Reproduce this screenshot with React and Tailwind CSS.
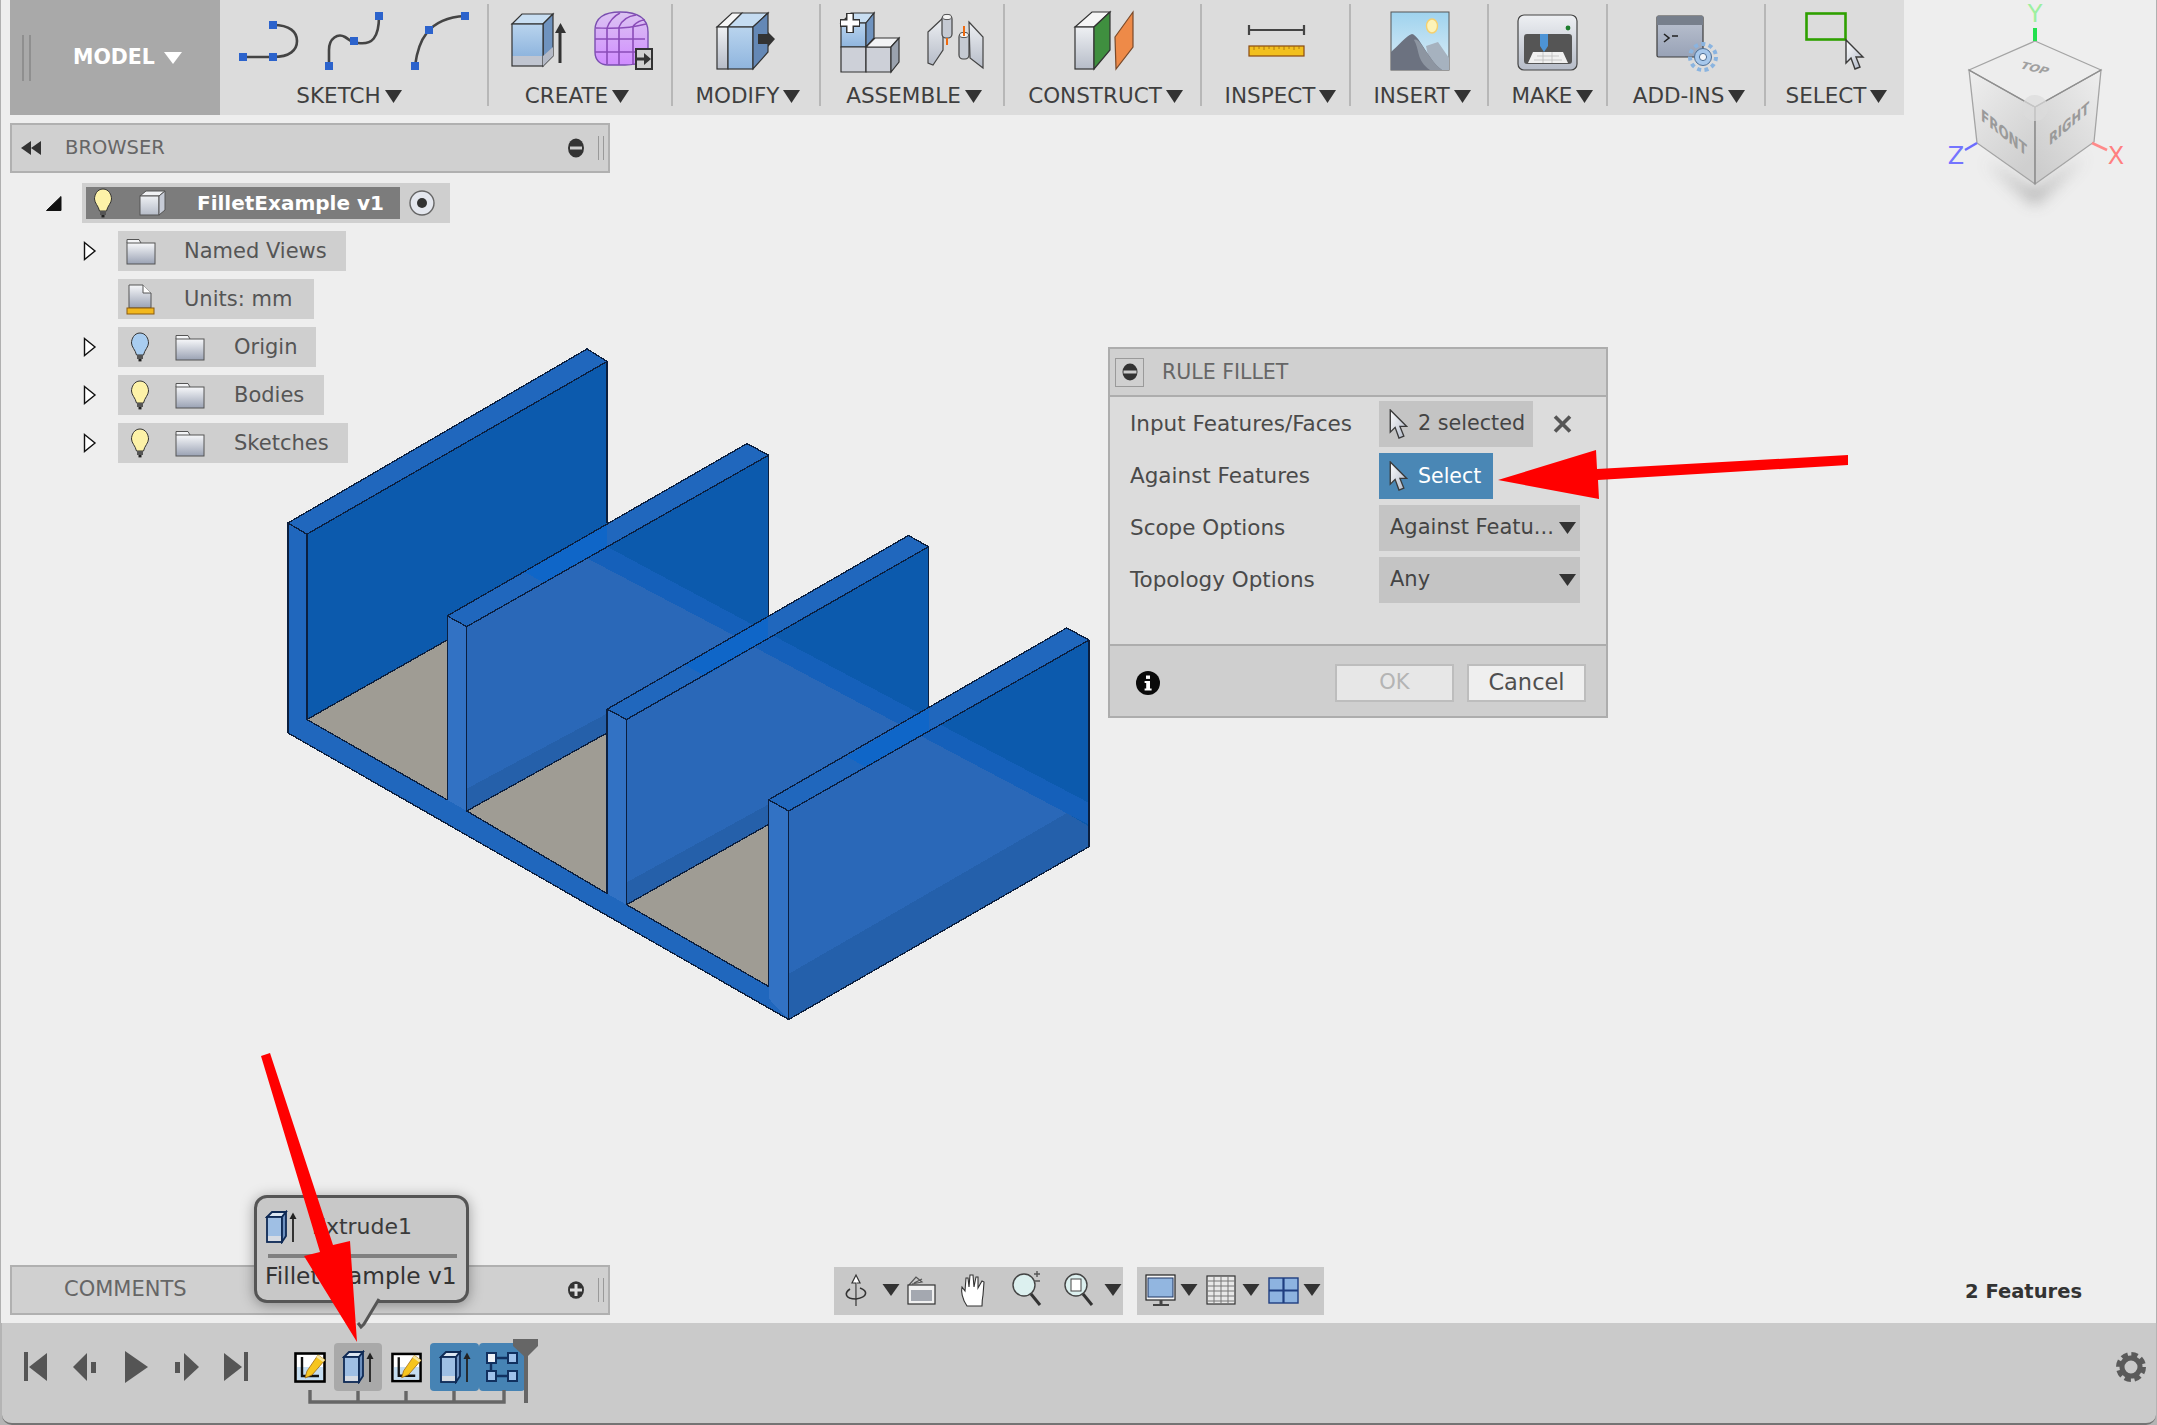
import React from "react";

const F = { fontFamily: '"DejaVu Sans", "Liberation Sans", sans-serif' };

const Z = (pts) => pts.map(([x, y]) => `${(270 + x / 1.845).toFixed(1)},${(340 + y / 2.24).toFixed(1)}`).join(" ");

function Defs() {
  return (
    <svg width="0" height="0" className="absolute">
      <defs>
        <linearGradient id="gBlue" x1="0" y1="0" x2="0" y2="1">
          <stop offset="0" stopColor="#b9d4ee" />
          <stop offset="1" stopColor="#8fb5de" />
        </linearGradient>
        <linearGradient id="gGrey" x1="0" y1="0" x2="0" y2="1">
          <stop offset="0" stopColor="#eef0f3" />
          <stop offset="1" stopColor="#b6bcc8" />
        </linearGradient>
        <linearGradient id="gFolder" x1="0" y1="0" x2="0" y2="1">
          <stop offset="0" stopColor="#f7f8fa" />
          <stop offset="1" stopColor="#9aa2b4" />
        </linearGradient>
        <linearGradient id="gSky" x1="0" y1="0" x2="0" y2="1">
          <stop offset="0" stopColor="#9fd3ee" />
          <stop offset="1" stopColor="#dcedf7" />
        </linearGradient>
        <linearGradient id="gPurple" x1="0" y1="0" x2="0" y2="1">
          <stop offset="0" stopColor="#dcc4f2" />
          <stop offset="1" stopColor="#d08cff" />
        </linearGradient>
        <linearGradient id="gCursor" x1="0" y1="0" x2="1" y2="1">
          <stop offset="0" stopColor="#ffffff" />
          <stop offset="1" stopColor="#aeb6c6" />
        </linearGradient>
        <linearGradient id="gWin" x1="0" y1="0" x2="0" y2="1">
          <stop offset="0" stopColor="#bcc3d1" />
          <stop offset="1" stopColor="#98a2b6" />
        </linearGradient>
        <linearGradient id="gCubeL" x1="0" y1="0" x2="0.6" y2="1">
          <stop offset="0" stopColor="#efefef" />
          <stop offset="1" stopColor="#cfcfcf" />
        </linearGradient>
        <linearGradient id="gCubeR" x1="1" y1="0" x2="0.2" y2="1">
          <stop offset="0" stopColor="#eeeeee" />
          <stop offset="1" stopColor="#cdcdcd" />
        </linearGradient>
        <filter id="fBlur" x="-60%" y="-60%" width="220%" height="220%">
          <feGaussianBlur stdDeviation="8" />
        </filter>
      </defs>
    </svg>
  );
}

const Caret = ({ cx, cy, w = 17, h = 12, fill = "#333" }) => (
  <polygon points={`${cx - w / 2},${cy - h / 2} ${cx + w / 2},${cy - h / 2} ${cx},${cy + h / 2}`} fill={fill} />
);

const Cursor = ({ x, y, s = 1 }) => (
  <polygon
    transform={`translate(${x} ${y}) scale(${s})`}
    points="0,0 0,23 5,18 9,29 14,27 10,17 17,17"
    fill="url(#gCursor)"
    stroke="#3a3a3a"
    strokeWidth="1.4"
  />
);

const Sq = ({ x, y }) => <rect x={x - 4} y={y - 4} width="8" height="8" fill="#2c63cc" />;

function ToolGroup({ left, width, label, dx = 0, last, children }) {
  return (
    <div className="flex flex-col items-center relative h-[115px] shrink-0" style={{ width }}>
      <svg width={width} height="78" viewBox={`${left} 4 ${width} 78`} className="shrink-0 mt-[4px]">
        {children}
      </svg>
      <div className="flex items-center gap-[4px] mt-[2px] text-[21.5px] leading-[24px] text-[#3f3f3f]" style={{ marginLeft: dx * 2 }}>
        <span>{label}</span>
        <svg width="17" height="13" viewBox="0 0 17 13"><polygon points="0,0 17,0 8.5,13" fill="#333" /></svg>
      </div>
      {!last && <div className="absolute right-[-1px] top-[4px] h-[102px] w-[2px] bg-[#b7b7b7]" />}
    </div>
  );
}

function Toolbar() {
  return (
    <div className="flex ml-[10px] w-[1894px] h-[115px] bg-[#dcdcdc] shrink-0">
      <div className="w-[210px] h-[115px] bg-[#a9a9a9] flex items-center shrink-0">
        <div className="ml-[12px] w-[9px] h-[46px] border-x-2 border-[#8f8f8f]" />
        <span className="ml-[42px] text-white font-bold text-[20.5px] leading-none">MODEL</span>
        <svg className="ml-[9px]" width="18" height="12" viewBox="0 0 18 12"><polygon points="0,0 18,0 9,12" fill="#fff" /></svg>
      </div>

      <ToolGroup left={220} width={268} label="SKETCH" dx={-5}>
        <path d="M243 57H273C290 57 297 50 297 41C297 32 290 25 273 25" fill="none" stroke="#444" strokeWidth="2.6" />
        <Sq x={243} y={57} /><Sq x={273} y={57} /><Sq x={273} y={25} />
        <path d="M329 66V50C329 38 338 33 345 37C350 40 352 43 358 43C372 45 379 38 379 16" fill="none" stroke="#444" strokeWidth="2.6" />
        <Sq x={329} y={66} /><Sq x={354} y={41} /><Sq x={379} y={16} />
        <path d="M415 66C418 42 427 18 465 16" fill="none" stroke="#444" strokeWidth="2.6" />
        <Sq x={415} y={66} /><Sq x={429} y={30} /><Sq x={465} y={16} />
      </ToolGroup>

      <ToolGroup left={488} width={184} label="CREATE" dx={-3}>
        <polygon points="512,24 522,14 553,14 543,24" fill="#c8def2" stroke="#333" strokeWidth="1.2" />
        <polygon points="543,24 553,14 553,56 543,66" fill="#6f93bf" stroke="#333" strokeWidth="1.2" />
        <rect x="512" y="24" width="31" height="32" fill="url(#gBlue)" />
        <rect x="512" y="56" width="31" height="10" fill="#c0c5d0" />
        <rect x="512" y="24" width="31" height="42" fill="none" stroke="#333" strokeWidth="1.2" />
        <polygon points="543,56 553,47 553,56 543,66" fill="#b4b9c5" />
        <path d="M560 63V30" stroke="#333" strokeWidth="3" />
        <polygon points="555,33 560.5,23 566,33" fill="#333" />
        <path d="M595 30C595 18 604 12 620 12C638 12 648 18 648 32V52C648 60 640 65 625 65H608C600 65 595 60 595 52Z" fill="url(#gPurple)" stroke="#7a4fb0" strokeWidth="1.4" />
        <path d="M595 39H645M595 52H645M607 28V64M619 27V65M633 26V65" stroke="#8a4cb8" strokeWidth="1.6" fill="none" />
        <path d="M596 28C606 28 625 30 646 24M607 28C610 20 614 16 620 13M619 27C622 20 628 16 636 15M633 26C637 22 640 20 645 20" stroke="#8a4cb8" strokeWidth="1.4" fill="none" />
        <rect x="636" y="49" width="16" height="20" fill="#cfcfcf" stroke="#333" strokeWidth="2" />
        <path d="M635 59H645" stroke="#333" strokeWidth="3" />
        <polygon points="644,53 651,59 644,65" fill="#333" />
      </ToolGroup>

      <ToolGroup left={672} width={148} label="MODIFY" dx={2}>
        <polygon points="717,27 732,13 742,13 728,27" fill="#f6f6f6" stroke="#333" strokeWidth="1.2" />
        <rect x="717" y="27" width="11" height="42" fill="url(#gGrey)" stroke="#333" strokeWidth="1.2" />
        <polygon points="728,27 742,13 768,13 753,27" fill="#c5dcf2" stroke="#333" strokeWidth="1.2" />
        <rect x="728" y="27" width="25" height="42" fill="url(#gBlue)" stroke="#333" strokeWidth="1.2" />
        <polygon points="753,27 768,13 768,52 753,69" fill="#6488b6" stroke="#333" strokeWidth="1.2" />
        <polygon points="758,34 768,34 768,32 775,39 768,47 768,44 758,44" fill="#333" />
      </ToolGroup>

      <ToolGroup left={820} width={184} label="ASSEMBLE" dx={2}>
        <polygon points="841,23 851,13 874,13 866,23" fill="#c8def2" stroke="#333" strokeWidth="1.2" />
        <rect x="841" y="23" width="25" height="24" fill="url(#gBlue)" stroke="#333" strokeWidth="1.2" />
        <polygon points="866,23 874,13 874,38 866,47" fill="#6f93bf" stroke="#333" strokeWidth="1.2" />
        <polygon points="841,47 866,47 866,72 841,72" fill="#cdd0d8" stroke="#333" strokeWidth="1.2" />
        <polygon points="866,47 891,47 891,72 866,72" fill="#cdd0d8" stroke="#333" strokeWidth="1.2" />
        <polygon points="866,47 875,38 899,38 891,47" fill="#f2f3f5" stroke="#333" strokeWidth="1.2" />
        <polygon points="891,47 899,38 899,62 891,72" fill="#9aa2ae" stroke="#333" strokeWidth="1.2" />
        <path d="M850 13V33M840 23H860" stroke="#333" strokeWidth="8" />
        <path d="M850 14V32M841 23H859" stroke="#fff" strokeWidth="5" />
        <polygon points="928,32 943,18 943,50 933,65 928,63" fill="url(#gGrey)" stroke="#444" strokeWidth="1.2" />
        <rect x="942" y="15" width="10" height="23" rx="4" fill="#c5cad3" stroke="#444" strokeWidth="1.2" />
        <ellipse cx="947" cy="17" rx="4.5" ry="2.6" fill="#f4f4f4" stroke="#555" strokeWidth="1" />
        <path d="M947 38V45" stroke="#ef6a10" strokeWidth="2" />
        <polygon points="969,22 983,37 983,68 970,58" fill="url(#gGrey)" stroke="#444" strokeWidth="1.2" />
        <rect x="959" y="33" width="10" height="26" rx="4" fill="#c5cad3" stroke="#444" strokeWidth="1.2" />
        <ellipse cx="964" cy="35" rx="4.5" ry="2.6" fill="#f4f4f4" stroke="#555" strokeWidth="1" />
        <path d="M964 26V36" stroke="#ef6a10" strokeWidth="2" />
      </ToolGroup>

      <ToolGroup left={1004} width={197} label="CONSTRUCT" dx={3}>
        <polygon points="1075,27 1092,12 1110,12 1094,27" fill="#f6f6f6" stroke="#333" strokeWidth="1.2" />
        <rect x="1075" y="27" width="19" height="42" fill="url(#gGrey)" stroke="#333" strokeWidth="1.2" />
        <polygon points="1094,27 1110,12 1110,50 1094,69" fill="#3f8f3f" stroke="#333" strokeWidth="1.2" />
        <polygon points="1115,37 1133,12 1133,47 1116,69" fill="#ee8a48" stroke="#7a4a2a" strokeWidth="1.2" />
      </ToolGroup>

      <ToolGroup left={1201} width={149} label="INSPECT" dx={5}>
        <path d="M1249 25V35M1304 25V35M1249 30H1304" stroke="#444" strokeWidth="2.2" fill="none" />
        <rect x="1249" y="46" width="55" height="10" fill="#f2c01e" stroke="#8a4a10" strokeWidth="1.2" />
        <path d="M1254 46v4M1259 46v3M1264 46v4M1269 46v3M1274 46v4M1279 46v3M1284 46v4M1289 46v3M1294 46v4M1299 46v3" stroke="#a06a10" strokeWidth="0.8" />
      </ToolGroup>

      <ToolGroup left={1350} width={138} label="INSERT" dx={3}>
        <rect x="1391" y="12" width="58" height="58" fill="url(#gSky)" stroke="#555" strokeWidth="1" />
        <ellipse cx="1432" cy="26" rx="5.5" ry="7" fill="#fdf3b8" stroke="#f5d070" strokeWidth="1.4" />
        <polygon points="1431,70 1426,46 1438,42 1449,58 1449,70" fill="#a6b2bf" />
        <path d="M1391 70V52C1398 46 1406 36 1412 34C1420 36 1428 60 1442 70Z" fill="#6c7280" />
        <path d="M1414 40C1420 50 1416 60 1430 70H1442C1428 60 1420 36 1414 40Z" fill="#8d95a1" />
      </ToolGroup>

      <ToolGroup left={1488} width={119} label="MAKE" dx={5}>
        <rect x="1518" y="15" width="59" height="55" rx="6" fill="url(#gGrey)" stroke="#444" strokeWidth="1.2" />
        <rect x="1524" y="34" width="48" height="30" rx="3" fill="#555" />
        <circle cx="1568" cy="28" r="2.4" fill="#1d7d2d" />
        <polygon points="1533,52 1563,52 1568,63 1528,63" fill="#f0f0f0" />
        <path d="M1537 56H1559M1534 60H1562M1543 52V63M1552 52V63" stroke="#bbb" strokeWidth="0.8" />
        <polygon points="1540,34 1548,34 1548,46 1544,52 1540,46" fill="#4d94d6" />
      </ToolGroup>

      <ToolGroup left={1607} width={158} label="ADD-INS" dx={3}>
        <rect x="1657" y="16" width="46" height="41" rx="1.5" fill="url(#gWin)" stroke="#3c3c3c" strokeWidth="1.2" />
        <rect x="1657" y="16" width="46" height="9" fill="#777f8c" />
        <path d="M1664 34L1669 38L1664 42M1672 36H1678" stroke="#222" strokeWidth="1.6" fill="none" />
        <circle cx="1703" cy="57" r="13" fill="none" stroke="#8ab4e0" strokeWidth="4" strokeDasharray="4 3.4" />
        <circle cx="1703" cy="57" r="8.5" fill="#a7c8ec" stroke="#4d6e94" strokeWidth="1" />
        <circle cx="1703" cy="57" r="3.6" fill="#f4f6f9" stroke="#4d6e94" strokeWidth="1" />
      </ToolGroup>

      <ToolGroup left={1765} width={139} label="SELECT" dx={2} last>
        <rect x="1806.5" y="13.5" width="39" height="26" fill="none" stroke="#2fa000" strokeWidth="2.6" />
        <Cursor x={1846} y={40} s={1} />
      </ToolGroup>
    </div>
  );
}

const Bulb = ({ color = "#fdf2a8" }) => (
  <svg width="20" height="30" viewBox="0 0 20 30">
    <path d="M10 1C4 1 1.5 7 1.5 11C1.5 15 5.5 18 6.5 23H13.5C14.5 18 18.5 15 18.5 11C18.5 7 16 1 10 1Z" fill={color} stroke="#333" strokeWidth="1" />
    <rect x="7" y="23" width="6" height="4" fill="#555" />
    <rect x="8.5" y="27" width="3" height="2.4" fill="#222" />
  </svg>
);

const Folder = () => (
  <svg width="30" height="27" viewBox="0 0 30 27">
    <path d="M1 5V1.5H13L15 5" fill="#f3f4f6" stroke="#555" strokeWidth="1" />
    <rect x="1" y="5" width="28" height="21" fill="url(#gFolder)" stroke="#555" strokeWidth="1" />
  </svg>
);

const Expand = () => (
  <svg width="14" height="20" viewBox="0 0 14 20" className="shrink-0">
    <polygon points="1.5,1.5 12,10 1.5,18.5" fill="#fff" stroke="#111" strokeWidth="1.4" />
  </svg>
);

function TreeRow({ width, expand = true, children }) {
  return (
    <div className="flex items-center h-10">
      <div className="ml-[83px] w-[35px] flex shrink-0">{expand && <Expand />}</div>
      <div className="h-10 bg-[#cfcfcf] flex items-center text-[21px] text-[#555]" style={{ width }}>
        {children}
      </div>
    </div>
  );
}

const Label = ({ ml, children }) => (
  <span className="pt-[2px]" style={{ marginLeft: ml }}>{children}</span>
);

function Browser() {
  return (
    <div className="shrink-0">
      <div className="ml-[10px] mt-[8px] w-[600px] h-[50px] bg-[#d0d0d0] border-2 border-[#b0b0b0] flex items-center">
        <svg className="ml-[8px]" width="22" height="14" viewBox="0 0 22 14"><polygon points="11,0 11,14 1,7" fill="#333" /><polygon points="21,0 21,14 11,7" fill="#333" /></svg>
        <span className="ml-[23px] text-[19.5px] text-[#666]">BROWSER</span>
        <svg className="ml-auto mr-[14px]" width="16" height="20" viewBox="0 0 16 20"><ellipse cx="8" cy="10" rx="8" ry="9.5" fill="#333" /><rect x="2" y="8.5" width="12" height="3" fill="#ccc" /></svg>
        <div className="mr-[4px] w-[6px] h-[24px] border-x border-[#999]" />
      </div>
      <div className="mt-[10px] flex flex-col gap-2">
        <div className="flex items-center h-10">
          <svg className="ml-[46px] shrink-0" width="16" height="15" viewBox="0 0 16 15"><polygon points="15,0.5 15,14.5 0.5,14.5" fill="#111" stroke="#111" /></svg>
          <div className="ml-[20px] w-[368px] h-10 bg-[#cfcfcf] flex items-center">
            <div className="ml-[4px] w-[314px] h-8 bg-[#7c7c7c] flex items-center text-white font-bold text-[20px]">
              <span className="ml-[7px] flex"><Bulb /></span>
              <svg className="ml-[26px]" width="27" height="26" viewBox="0 0 27 26">
                <polygon points="1,6 7,1 26,1 20,6" fill="#f1f2f4" stroke="#555" strokeWidth="1" />
                <rect x="1" y="6" width="19" height="19" fill="url(#gGrey)" stroke="#555" strokeWidth="1" />
                <polygon points="20,6 26,1 26,20 20,25" fill="#c6cbd6" stroke="#555" strokeWidth="1" />
              </svg>
              <span className="ml-[31px] leading-none">FilletExample v1</span>
            </div>
            <svg className="ml-[9px]" width="26" height="26" viewBox="0 0 26 26">
              <circle cx="13" cy="13" r="12" fill="#e4e7ee" stroke="#666" strokeWidth="1.4" />
              <circle cx="13" cy="13" r="5" fill="#333" />
            </svg>
          </div>
        </div>
        <TreeRow width={228}>
          <span className="ml-[8px] flex"><Folder /></span>
          <Label ml={28}>Named Views</Label>
        </TreeRow>
        <TreeRow width={196} expand={false}>
          <svg className="ml-[8px]" width="29" height="31" viewBox="0 0 29 31">
            <path d="M3 1H17L25 9V24H3Z" fill="url(#gFolder)" stroke="#555" strokeWidth="1" />
            <path d="M17 1V9H25" fill="#fff" stroke="#555" strokeWidth="1" />
            <rect x="1" y="24" width="27" height="6" fill="#f2b81e" stroke="#8a5a10" strokeWidth="1" />
          </svg>
          <Label ml={29}>Units: mm</Label>
        </TreeRow>
        <TreeRow width={198}>
          <span className="ml-[12px] flex"><Bulb color="#a9cdf0" /></span>
          <span className="ml-[25px] flex"><Folder /></span>
          <Label ml={29}>Origin</Label>
        </TreeRow>
        <TreeRow width={206}>
          <span className="ml-[12px] flex"><Bulb /></span>
          <span className="ml-[25px] flex"><Folder /></span>
          <Label ml={29}>Bodies</Label>
        </TreeRow>
        <TreeRow width={230}>
          <span className="ml-[12px] flex"><Bulb /></span>
          <span className="ml-[25px] flex"><Folder /></span>
          <Label ml={29}>Sketches</Label>
        </TreeRow>
      </div>
    </div>
  );
}

function Model() {
  const line = "#0b1f3f";
  const patch = [[470, 520], [622, 412], [622, 463], [507, 545]];
  const shift = (p, dx, dy) => p.map(([x, y]) => [x + dx, y + dy]);
  return (
    <svg className="absolute left-[280px] top-[340px]" width="820" height="690" viewBox="280 340 820 690">
      <g shapeRendering="crispEdges">
        <polygon points={Z([[68, 435], [622, 48], [622, 480], [68, 850]])} fill="#0c5aad" />
        <polygon points={Z([[68, 850], [327, 672], [327, 1030]])} fill="#9f9c94" />

        <polygon points={Z([[363, 642], [920, 258], [920, 680], [363, 1055]])} fill="#0c5aad" />
        <polygon points={Z([[363, 642], [585, 489], [886, 681], [363, 1055]])} fill="#2a68b8" />
        <polygon points={Z([[585, 489], [622, 463], [920, 657], [886, 681]])} fill="#1560ba" />
        <polygon points={Z([[363, 1005], [640, 825], [640, 880], [363, 1055]])} fill="#2560aa" />
        <polygon points={Z([[363, 1055], [622, 880], [622, 1240]])} fill="#9f9c94" />

        <polygon points={Z([[658, 850], [1215, 463], [1215, 890], [658, 1265]])} fill="#0c5aad" />
        <polygon points={Z([[658, 850], [892, 687], [1203, 888], [658, 1265]])} fill="#2a68b8" />
        <polygon points={Z([[892, 687], [928, 662], [1215, 847], [1215, 880], [1203, 888]])} fill="#1560ba" />
        <polygon points={Z([[658, 1215], [935, 1030], [935, 1080], [658, 1265]])} fill="#2560aa" />
        <polygon points={Z([[658, 1265], [920, 1085], [920, 1448]])} fill="#9f9c94" />

        <polygon points={Z([[957, 1055], [1511, 672], [1511, 1135], [957, 1522]])} fill="#0c5aad" />
        <polygon points={Z([[957, 1055], [1201, 887], [1470, 1060], [957, 1420]])} fill="#2a68b8" />
        <polygon points={Z([[1201, 887], [1237, 862], [1511, 1037], [1511, 1085], [1470, 1060]])} fill="#1560ba" />
        <polygon points={Z([[957, 1420], [1470, 1060], [1511, 1090], [1511, 1135], [957, 1522]])} fill="#2460ab" />

        <polygon points={Z([[33, 410], [585, 20], [622, 48], [68, 435]])} fill="#2067bd" />
        <polygon points={Z([[33, 410], [68, 435], [68, 850], [33, 880]])} fill="#2067bd" />
        <polygon points={Z([[33, 880], [68, 850], [327, 1030], [363, 1055], [622, 1240], [658, 1265], [920, 1448], [957, 1475], [957, 1522]])} fill="#2067bd" />

        <polygon points={Z([[327, 618], [880, 232], [920, 258], [363, 642]])} fill="#2067bd" />
        <polygon points={Z(patch)} fill="#0f66c8" />
        <polygon points={Z([[327, 618], [363, 642], [363, 1055], [327, 1030]])} fill="#3272c4" />

        <polygon points={Z([[622, 827], [1178, 438], [1215, 463], [658, 850]])} fill="#2067bd" />
        <polygon points={Z(shift(patch, 296, 208))} fill="#0f66c8" />
        <polygon points={Z([[622, 827], [658, 850], [658, 1265], [622, 1240]])} fill="#3272c4" />

        <polygon points={Z([[920, 1030], [1470, 645], [1511, 672], [957, 1055]])} fill="#2067bd" />
        <polygon points={Z(shift(patch, 594, 413))} fill="#0f66c8" />
        <polygon points={Z([[920, 1030], [957, 1055], [957, 1522], [920, 1475]])} fill="#3272c4" />
      </g>
      <g fill="none" stroke={line} strokeWidth="1.3" shapeRendering="crispEdges">
        <polyline points={Z([[68, 850], [68, 435], [622, 48]])} />
        <polyline points={Z([[33, 880], [33, 410], [585, 20], [622, 48], [622, 410]])} />
        <polyline points={Z([[33, 410], [68, 435]])} />
        <polyline points={Z([[327, 1030], [327, 618], [880, 232], [920, 258], [920, 615]])} />
        <polyline points={Z([[327, 618], [363, 642], [920, 258]])} />
        <polyline points={Z([[363, 642], [363, 1055]])} />
        <polyline points={Z([[622, 1240], [622, 827], [1178, 438], [1215, 463], [1215, 825]])} />
        <polyline points={Z([[622, 827], [658, 850], [1215, 463]])} />
        <polyline points={Z([[658, 850], [658, 1265]])} />
        <polyline points={Z([[920, 1448], [920, 1030], [1470, 645], [1511, 672], [1511, 1135]])} />
        <polyline points={Z([[920, 1030], [957, 1055], [1511, 672]])} />
        <polyline points={Z([[957, 1055], [957, 1522]])} />
        <polyline points={Z([[33, 880], [957, 1522], [1511, 1135]])} />
        <polyline points={Z([[327, 672], [68, 850], [327, 1030]])} />
        <polyline points={Z([[622, 880], [363, 1055], [622, 1240]])} />
        <polyline points={Z([[920, 1085], [658, 1265], [920, 1448]])} />
      </g>
    </svg>
  );
}

function ViewCube() {
  return (
    <svg className="absolute right-0 top-0" width="217" height="220" viewBox="1940 0 217 220">
      <polygon points="1985,160 2035,192 2086,155 2035,204" fill="#8a8a8a" opacity="0.75" filter="url(#fBlur)" />
      <polygon points="2035,107 1969,70 1977,143 2035,184" fill="url(#gCubeL)" stroke="#a4a4a4" strokeWidth="1.3" />
      <polygon points="2035,107 2101,70 2094,142 2035,184" fill="url(#gCubeR)" stroke="#a4a4a4" strokeWidth="1.3" />
      <polygon points="2035,41 2101,70 2035,107 1969,70" fill="#ededed" stroke="#a4a4a4" strokeWidth="1.3" />
      <path d="M1969 70L2035 107L2101 70M2035 107V184" fill="none" stroke="#8e8e8e" strokeWidth="1.3" />
      <circle cx="2035" cy="108" r="13" fill="#dcdcdc" opacity="0.7" />
      <text transform="matrix(1 0.25 -0.55 0.75 2019 68)" fontSize="12" fill="#a0a0a0" style={F} fontWeight="bold">TOP</text>
      <text transform="matrix(1 0.8 0 1.35 1981 120)" fontSize="12" fill="#9a9a9a" style={F} fontWeight="bold">FRONT</text>
      <text transform="matrix(1 -0.85 0 1.35 2049 146)" fontSize="11.5" fill="#9a9a9a" style={F} fontWeight="bold">RIGHT</text>
      <path d="M2035 28V41" stroke="#22e04e" strokeWidth="4" />
      <text x="2035" y="22" textAnchor="middle" fontSize="24" fill="#9cf0a0" style={F}>Y</text>
      <path d="M1965 150L1977 143" stroke="#6c6cff" strokeWidth="2.6" />
      <text x="1956" y="164" textAnchor="middle" fontSize="24" fill="#7474ff" style={F}>Z</text>
      <path d="M2092 143L2107 150" stroke="#ff8a8a" strokeWidth="2.6" />
      <text x="2116" y="164" textAnchor="middle" fontSize="24" fill="#ff7f7f" style={F}>X</text>
    </svg>
  );
}

function FieldRow({ label, children }) {
  return (
    <div className="flex items-center h-[46px]">
      <span className="w-[249px] shrink-0 text-[21.5px] text-[#4a4a4a]">{label}</span>
      {children}
    </div>
  );
}

function DropField({ text }) {
  return (
    <div className="w-[201px] h-[46px] bg-[#c4c4c4] flex items-center pl-[11px] pr-[4px] text-[21px] text-[#444]">
      <span>{text}</span>
      <svg className="ml-auto" width="17" height="12" viewBox="0 0 17 12"><polygon points="0,0 17,0 8.5,12" fill="#333" /></svg>
    </div>
  );
}

const SmallCursor = () => (
  <svg className="ml-[10px]" width="19" height="30" viewBox="-1 -1 19 31"><Cursor x={0} y={0} /></svg>
);

function Dialog() {
  return (
    <div className="absolute left-[1108px] top-[347px] w-[500px] h-[371px] border-2 border-[#adadad] flex flex-col bg-[#dcdcdc]">
      <div className="h-[48px] shrink-0 bg-[#d0d0d0] border-b-2 border-[#adadad] flex items-center">
        <div className="ml-[5px] w-[29px] h-[29px] border border-[#9a9a9a] flex items-center justify-center">
          <svg width="16" height="18" viewBox="0 0 16 18"><ellipse cx="8" cy="9" rx="7.5" ry="8.5" fill="#333" /><rect x="1.5" y="7.5" width="13" height="3" fill="#ccc" /></svg>
        </div>
        <span className="ml-[18px] text-[20.5px] text-[#666]">RULE FILLET</span>
      </div>
      <div className="flex-1 pl-[20px] pt-[4px] flex flex-col gap-[6px]">
        <FieldRow label="Input Features/Faces">
          <div className="w-[154px] h-[46px] bg-[#c4c4c4] flex items-center text-[20.7px] text-[#444]">
            <SmallCursor />
            <span className="ml-[10px]">2 selected</span>
          </div>
          <svg className="ml-[20px]" width="19" height="18" viewBox="0 0 19 18"><path d="M2 1.5L17 16.5M17 1.5L2 16.5" stroke="#555" strokeWidth="3.6" /></svg>
        </FieldRow>
        <FieldRow label="Against Features">
          <div className="w-[114px] h-[46px] bg-[#4a87b5] flex items-center text-[20.5px] text-white">
            <SmallCursor />
            <span className="ml-[10px]">Select</span>
          </div>
        </FieldRow>
        <FieldRow label="Scope Options"><DropField text="Against Featu..." /></FieldRow>
        <FieldRow label="Topology Options"><DropField text="Any" /></FieldRow>
      </div>
      <div className="h-[72px] shrink-0 bg-[#cfcfcf] border-t-2 border-[#adadad] flex items-center pt-[3px]">
        <svg className="ml-[26px]" width="24" height="24" viewBox="0 0 24 24">
          <circle cx="12" cy="12" r="12" fill="#0a0a0a" />
          <rect x="10" y="4.5" width="4" height="3.4" fill="#fff" />
          <path d="M8.6 10H14V17.5H15.6V19.6H8.6V17.5H10.2V12H8.6Z" fill="#fff" />
        </svg>
        <div className="ml-[175px] w-[119px] h-[38px] bg-[#e7e7e7] border-2 border-[#bdbdbd] flex items-center justify-center text-[21px] text-[#b4b4b4]">OK</div>
        <div className="ml-[13px] w-[119px] h-[38px] bg-[#efefef] border-2 border-[#bdbdbd] flex items-center justify-center text-[22.5px] text-[#4f4f4f]">Cancel</div>
      </div>
    </div>
  );
}

const ExtrudeIcon = ({ w = 32, h = 34 }) => (
  <svg width={w} height={h} viewBox="0 0 32 34">
    <polygon points="2,7 7,2 21,2 17,7" fill="#dbe6f2" stroke="#0f2a55" strokeWidth="1.8" />
    <rect x="2" y="7" width="15" height="25" fill="#9fbfe4" stroke="#0f2a55" strokeWidth="1.8" />
    <rect x="3" y="26" width="13" height="5" fill="#d6dbe3" />
    <polygon points="17,7 21,2 21,26 17,32" fill="#6c8fbe" stroke="#0f2a55" strokeWidth="1.8" />
    <path d="M28 32V8" stroke="#222" strokeWidth="1.8" />
    <polygon points="24.5,9 28,2.5 31.5,9" fill="#222" />
  </svg>
);

const SketchIcon = () => (
  <svg width="32" height="31" viewBox="0 0 32 31">
    <rect x="1.5" y="1.5" width="29" height="28" fill="#fff" stroke="#000" strokeWidth="2.6" />
    <rect x="3" y="15" width="26" height="13" fill="#b5d4ee" opacity="0.8" />
    <path d="M8 5V24H25" stroke="#111" strokeWidth="2.4" fill="none" />
    <polygon points="24,3 31,8 18,23 11,26 13,19" fill="#f6c51e" stroke="#a06a10" strokeWidth="0.8" />
    <polygon points="24,3 31,8 29,10 22,5" fill="#f6e6a0" />
  </svg>
);

const NetworkIcon = () => (
  <svg width="32" height="34" viewBox="0 0 32 34">
    <path d="M5 8H27M5 8V26M5 26H27" stroke="#11305f" strokeWidth="2.4" fill="none" />
    <rect x="1" y="3" width="9" height="10" fill="#eef2f7" stroke="#11305f" strokeWidth="2" />
    <rect x="22" y="3" width="9" height="10" fill="#9fc1ea" stroke="#11305f" strokeWidth="2" />
    <rect x="1" y="21" width="9" height="10" fill="#9fc1ea" stroke="#11305f" strokeWidth="2" />
    <rect x="22" y="21" width="9" height="10" fill="#9fc1ea" stroke="#11305f" strokeWidth="2" />
  </svg>
);

const PB = ({ w = 24, children }) => (
  <svg width={w} height="32" viewBox={`0 0 ${w} 32`} className="shrink-0">{children}</svg>
);

function Timeline() {
  return (
    <div className="shrink-0 bg-[#b4b4b4]">
      <div className="relative h-[102px] ml-[2px] mr-[1px] bg-[#cacaca] rounded-b-[10px] border-b-2 border-[#747474] flex items-center pb-[12px]">
        <div className="ml-[22px] flex items-center gap-[25px]">
          <PB><rect x="0" y="1" width="4" height="29" fill="#555" /><polygon points="23,2 23,30 5,16" fill="#555" /></PB>
          <PB w={26}><polygon points="14,2 14,30 0,16" fill="#555" /><rect x="18" y="11" width="5" height="11" fill="#555" /></PB>
          <PB><polygon points="1,0 1,32 24,16" fill="#555" /></PB>
          <PB w={26}><rect x="2" y="11" width="5" height="11" fill="#555" /><polygon points="11,2 11,30 26,16" fill="#555" /></PB>
          <PB><polygon points="0,2 0,30 18,16" fill="#555" /><rect x="20" y="1" width="4" height="29" fill="#555" /></PB>
        </div>
        <div className="ml-[46px] flex items-center h-12">
          <div className="w-[32px] flex"><SketchIcon /></div>
          <div className="ml-[8px] w-[48px] h-12 bg-[#a9a9a9] rounded-[4px] flex items-center justify-center"><ExtrudeIcon /></div>
          <div className="ml-[9px] w-[31px] flex"><SketchIcon /></div>
          <div className="ml-[8px] w-[49px] h-12 bg-[#4683b4] rounded-[4px] flex items-center justify-center"><ExtrudeIcon /></div>
          <div className="w-[46px] h-12 bg-[#4683b4] rounded-[4px] flex items-center justify-center"><NetworkIcon /></div>
        </div>
        <svg className="absolute left-[-2px] top-[-1323px]" width="560" height="1425" viewBox="0 0 560 1425">
          <path d="M310 1390V1402H504V1390M358 1391V1402M406 1391V1402M454 1391V1402" stroke="#666" strokeWidth="3.4" fill="none" />
          <path d="M526 1352V1403" stroke="#666" strokeWidth="4" />
          <polygon points="513,1339 538,1339 538,1346 526,1358 513,1346" fill="#666" />
        </svg>
        <svg className="ml-auto mr-[8px]" width="34" height="34" viewBox="0 0 34 34">
          <circle cx="17" cy="17" r="12" fill="none" stroke="#5a5a5a" strokeWidth="6" strokeDasharray="6 3.42" />
          <circle cx="17" cy="17" r="9" fill="none" stroke="#5a5a5a" strokeWidth="5" />
        </svg>
      </div>
    </div>
  );
}

function ViewControls() {
  return (
    <>
      <svg className="ml-[224px] mt-[2px] bg-[#c8c8c8]" width="289" height="48" viewBox="834 1267 289 48">
        <path d="M856 1306V1283H852L856 1275L860 1283H857" fill="#fff" stroke="#333" strokeWidth="1.2" />
        <path d="M860 1288C868 1291 868 1297 856 1299C845 1299 844 1293 850 1289" fill="none" stroke="#333" strokeWidth="1.6" />
        <Caret cx={891} cy={1290} />
        <path d="M909 1285L916 1277L922 1282L912 1284M922 1279L914 1283" fill="none" stroke="#555" strokeWidth="1.2" />
        <rect x="908" y="1285" width="27" height="19" fill="#f1f1f1" stroke="#333" strokeWidth="1.2" />
        <rect x="911" y="1290" width="21" height="11" fill="#a4a8b0" />
        <g transform="translate(3 -5)">
          <path d="M964 1311C959 1304 958 1296 959 1292L962 1296L963 1283L965 1283L966 1292L967 1280L970 1280L971 1292L973 1282L975 1282L975 1293L979 1286L981 1287L980 1300C979 1305 979 1308 979 1311Z" fill="#fff" stroke="#333" strokeWidth="1.1" />
        </g>
        <circle cx="1024" cy="1285" r="11" fill="#dcf0ef" stroke="#444" strokeWidth="1.4" />
        <path d="M1031 1294L1040 1305" stroke="#333" strokeWidth="3" />
        <path d="M1034 1274H1040M1037 1271V1277M1034 1281H1040" stroke="#555" strokeWidth="1.4" />
        <circle cx="1076" cy="1285" r="11" fill="#dcf0ef" stroke="#444" strokeWidth="1.4" />
        <rect x="1071" y="1279" width="10" height="12" fill="#fff" stroke="#444" />
        <path d="M1083 1294L1092 1305" stroke="#333" strokeWidth="3" />
        <Caret cx={1113} cy={1290} />
      </svg>
      <svg className="ml-[14px] mt-[2px] bg-[#c8c8c8]" width="187" height="48" viewBox="1137 1267 187 48">
        <rect x="1146" y="1275" width="29" height="25" fill="#f5f5f5" stroke="#222" strokeWidth="1.2" />
        <rect x="1148" y="1278" width="25" height="19" fill="#92b6e0" stroke="#1e3560" strokeWidth="1" />
        <path d="M1161 1300V1304" stroke="#444" strokeWidth="3" />
        <path d="M1153 1305H1169" stroke="#444" strokeWidth="2" />
        <Caret cx={1189} cy={1290} />
        <rect x="1207" y="1276" width="28" height="28" fill="#e8e8e8" stroke="#333" strokeWidth="1.2" />
        <path d="M1207 1281H1235M1207 1286H1235M1207 1291H1235M1207 1296H1235M1207 1301H1235M1214 1276V1304M1221 1276V1304M1228 1276V1304" stroke="#777" strokeWidth="1" />
        <Caret cx={1251} cy={1290} />
        <rect x="1269" y="1278" width="29" height="25" fill="#8db3e0" stroke="#1f3e80" strokeWidth="1.4" />
        <path d="M1283.5 1278V1303M1269 1290.5H1298" stroke="#1f3e80" strokeWidth="2.2" />
        <Caret cx={1312} cy={1290} />
      </svg>
    </>
  );
}

function Tooltip() {
  return (
    <div className="absolute left-[254px] top-[1195px] w-[215px] h-[108px]">
      <div className="absolute inset-0 rounded-[13px] bg-[#c8c8c8] border-[3px] border-[#555] shadow-[0_2px_14px_rgba(0,0,0,0.35)] flex flex-col pl-[8px] pr-[6px]">
        <div className="flex items-center h-[48px] pt-[9px] text-[22px] text-[#3b3b3b]">
          <ExtrudeIcon />
          <span className="ml-[15px]">Extrude1</span>
        </div>
        <div className="h-[4px] bg-[#808080] mt-[8px] mx-[3px]" />
        <div className="text-[23.3px] text-[#333] leading-[36px] whitespace-nowrap">FilletExample v1</div>
      </div>
      <svg className="absolute left-[78px] top-[103px]" width="52" height="32" viewBox="0 0 52 32">
        <polygon points="2,1 48,1 32,26 29,29 26,26" fill="#c8c8c8" />
        <path d="M47 1L32 26L29 29L26 25" fill="none" stroke="#555" strokeWidth="3" />
      </svg>
    </div>
  );
}

function Annotations() {
  return (
    <svg className="absolute left-0 top-0 pointer-events-none" width="2157" height="1425" viewBox="0 0 2157 1425">
      <polygon points="1498,480 1596,450 1597,469 1848,455 1848,465 1598,480 1599,499" fill="#ff0000" />
      <polygon points="261,1056 270,1053 333,1245 350,1241 357,1342 304,1256 320,1252" fill="#ff0000" />
    </svg>
  );
}

export default function App() {
  return (
    <div className="relative w-[2157px] h-[1425px] overflow-hidden bg-[#eeeeee] flex flex-col shadow-[inset_1px_0_0_#b0b0b0,inset_-1px_0_0_#b0b0b0]" style={F}>
      <Defs />
      <Toolbar />
      <Browser />
      <Model />
      <ViewCube />
      <Dialog />
      <div className="mt-auto flex items-start h-[50px] shrink-0">
        <div className="ml-[10px] w-[600px] h-[50px] bg-[#d0d0d0] border-2 border-[#b0b0b0] flex items-center shrink-0">
          <span className="ml-[52px] text-[21px] text-[#666]">COMMENTS</span>
          <svg className="ml-auto mr-[14px]" width="16" height="18" viewBox="0 0 16 18"><ellipse cx="8" cy="9" rx="8" ry="8.8" fill="#333" /><path d="M2 9H14M8 3V15" stroke="#ddd" strokeWidth="3" /></svg>
          <div className="mr-[4px] w-[6px] h-[24px] border-x border-[#999]" />
        </div>
        <ViewControls />
        <span className="ml-auto mr-[75px] mt-[15px] text-[19.5px] font-bold text-[#333] leading-[24px]">2 Features</span>
      </div>
      <div className="h-[8px] shrink-0" />
      <Timeline />
      <Tooltip />
      <Annotations />
    </div>
  );
}
